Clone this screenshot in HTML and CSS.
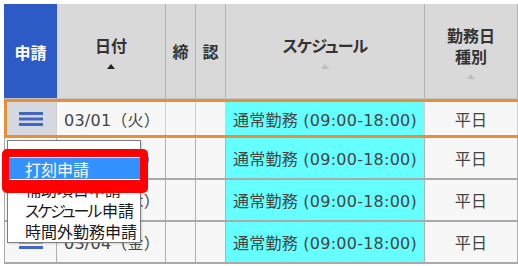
FILE: index.html
```html
<!DOCTYPE html>
<html lang="ja">
<head>
<meta charset="utf-8">
<link rel="stylesheet" href="styles.css">
</head>
<body>
<div class="page">
  <div class="table">
    <div class="row head">
      <div class="cell h apply">申請</div>
      <div class="cell h stack"><span>日付</span><i class="sort active"></i></div>
      <div class="cell h">締</div>
      <div class="cell h">認</div>
      <div class="cell h stack"><span class="kana-h">スケジュール</span><i class="sort"></i></div>
      <div class="cell h stack"><span class="two">勤務日<br>種別</span><i class="sort"></i></div>
      <div class="cell h"></div>
    </div>
    <div class="row data current">
      <div class="cell menu-btn"><svg width="24" height="14" viewBox="0 0 24 14"><rect x="0" y="0" width="24" height="3"/><rect x="0" y="5.5" width="24" height="3"/><rect x="0" y="11" width="24" height="3"/></svg></div>
      <div class="cell date">03/01（火）</div>
      <div class="cell"></div>
      <div class="cell"></div>
      <div class="cell sched">通常勤務 (09:00-18:00)</div>
      <div class="cell kind">平日</div>
      <div class="cell"></div>
    </div>
    <div class="row data">
      <div class="cell menu-cell"><svg width="24" height="14" viewBox="0 0 24 14"><rect x="0" y="0" width="24" height="3"/><rect x="0" y="5.5" width="24" height="3"/><rect x="0" y="11" width="24" height="3"/></svg></div>
      <div class="cell date">03/02（水）</div>
      <div class="cell"></div>
      <div class="cell"></div>
      <div class="cell sched">通常勤務 (09:00-18:00)</div>
      <div class="cell kind">平日</div>
      <div class="cell"></div>
    </div>
    <div class="row data">
      <div class="cell menu-cell"><svg width="24" height="14" viewBox="0 0 24 14"><rect x="0" y="0" width="24" height="3"/><rect x="0" y="5.5" width="24" height="3"/><rect x="0" y="11" width="24" height="3"/></svg></div>
      <div class="cell date">03/03（木）</div>
      <div class="cell"></div>
      <div class="cell"></div>
      <div class="cell sched">通常勤務 (09:00-18:00)</div>
      <div class="cell kind">平日</div>
      <div class="cell"></div>
    </div>
    <div class="row data">
      <div class="cell menu-cell"><svg width="24" height="14" viewBox="0 0 24 14"><rect x="0" y="0" width="24" height="3"/><rect x="0" y="5.5" width="24" height="3"/><rect x="0" y="11" width="24" height="3"/></svg></div>
      <div class="cell date">03/04（金）</div>
      <div class="cell"></div>
      <div class="cell"></div>
      <div class="cell sched">通常勤務 (09:00-18:00)</div>
      <div class="cell kind">平日</div>
      <div class="cell"></div>
    </div>
  </div>

  <ul class="menu">
    <li class="blank"></li>
    <li class="selected">打刻申請</li>
    <li>補助項目申請</li>
    <li><span class="kana">スケジュール</span>申請</li>
    <li>時間外勤務申請</li>
  </ul>
  <div class="callout"></div>
</div>
</body>
</html>
```

FILE: styles.css
```css
html, body {
  margin: 0;
  padding: 0;
  background: #ffffff;
  overflow: hidden;
}

.page {
  position: relative;
  width: 518px;
  height: 266px;
  padding: 4px 0 0 4px;
  box-sizing: border-box;
  overflow: hidden;
  font-family: "Noto Sans CJK JP", sans-serif;
}

.table {
  width: 600px;
}

.row {
  display: grid;
  grid-template-columns: 53px 109px 30px 30px 199px 93px 86px;
}

.cell {
  box-sizing: border-box;
  border-right: 1px solid #b3b3b3;
  display: flex;
  align-items: center;
  justify-content: center;
}

/* header */
.head {
  height: 95px;
  background: #d9d9d9;
  border-bottom: 1px solid #c4c4c4;
  box-sizing: border-box;
}

.h {
  font-weight: 700;
  font-size: 16px;
  color: #333333;
  font-feature-settings: "palt";
}

.kana-h {
  letter-spacing: -0.8px;
}

.apply {
  background: #2d5bc6;
  color: #ffffff;
  border-right: none;
  padding-top: 2px;
}

.stack {
  flex-direction: column;
  gap: 1px;
}

.stack .two {
  line-height: 21px;
  text-align: center;
  margin-top: 2px;
}

.sort {
  display: block;
  width: 0;
  height: 0;
  border-left: 4px solid transparent;
  border-right: 4px solid transparent;
  border-bottom: 5px solid #bdbdbd;
  margin-top: 6px;
}

.sort.active {
  border-bottom-color: #222222;
}

/* data rows */
.data {
  height: 42px;
  border-bottom: 2px solid #a9a9a9;
  box-sizing: border-box;
  background: #f7f7f7;
  font-family: "DejaVu Sans", "Noto Sans CJK JP", sans-serif;
  font-size: 16px;
  letter-spacing: 0.25px;
  color: #444444;
}

.data .cell {
  border-right-color: #b0b0b0;
}

.data .cell:first-child {
  border-left: 1px solid #a9a9a9;
}

.current {
  height: 39px;
  border-bottom: none;
  outline: 3px solid #e88f3a;
  outline-offset: -3px;
  position: relative;
  z-index: 1;
}

.current .cell {
  border-right-color: #d0d0d0;
}

.menu-btn {
  background: #d5d8df;
  padding-top: 1px;
}

.menu-btn svg, .menu-cell svg {
  fill: #4166c6;
}

.date {
  justify-content: flex-start;
  padding-left: 7px;
}

.sched {
  background: #66ffff;
}

/* dropdown */
.menu {
  position: absolute;
  left: 7px;
  top: 140px;
  width: 134px;
  margin: 0;
  padding: 0;
  list-style: none;
  background: #ffffff;
  border: 1px solid #7d7d7d;
  box-sizing: border-box;
  box-shadow: 1px 1px 2px rgba(0, 0, 0, 0.15);
  z-index: 5;
  font-family: "Noto Sans CJK JP", sans-serif;
  font-size: 16px;
  color: #1a1a1a;
  font-feature-settings: "palt";
}

.menu li {
  height: 21px;
  line-height: 21px;
  padding-left: 17px;
  white-space: nowrap;
}

.menu li.blank {
  height: 17px;
}

.menu li.selected {
  background: #3392ff;
  color: #ffffff;
  line-height: 23px;
}

.menu .kana {
  letter-spacing: -2.2px;
  margin-right: 2px;
}

.callout {
  position: absolute;
  left: 2px;
  top: 149px;
  width: 146px;
  height: 44px;
  box-sizing: border-box;
  border-style: solid;
  border-color: #ff0000;
  border-width: 8px 8px 13px 7px;
  border-radius: 5px;
  z-index: 6;
}
```
